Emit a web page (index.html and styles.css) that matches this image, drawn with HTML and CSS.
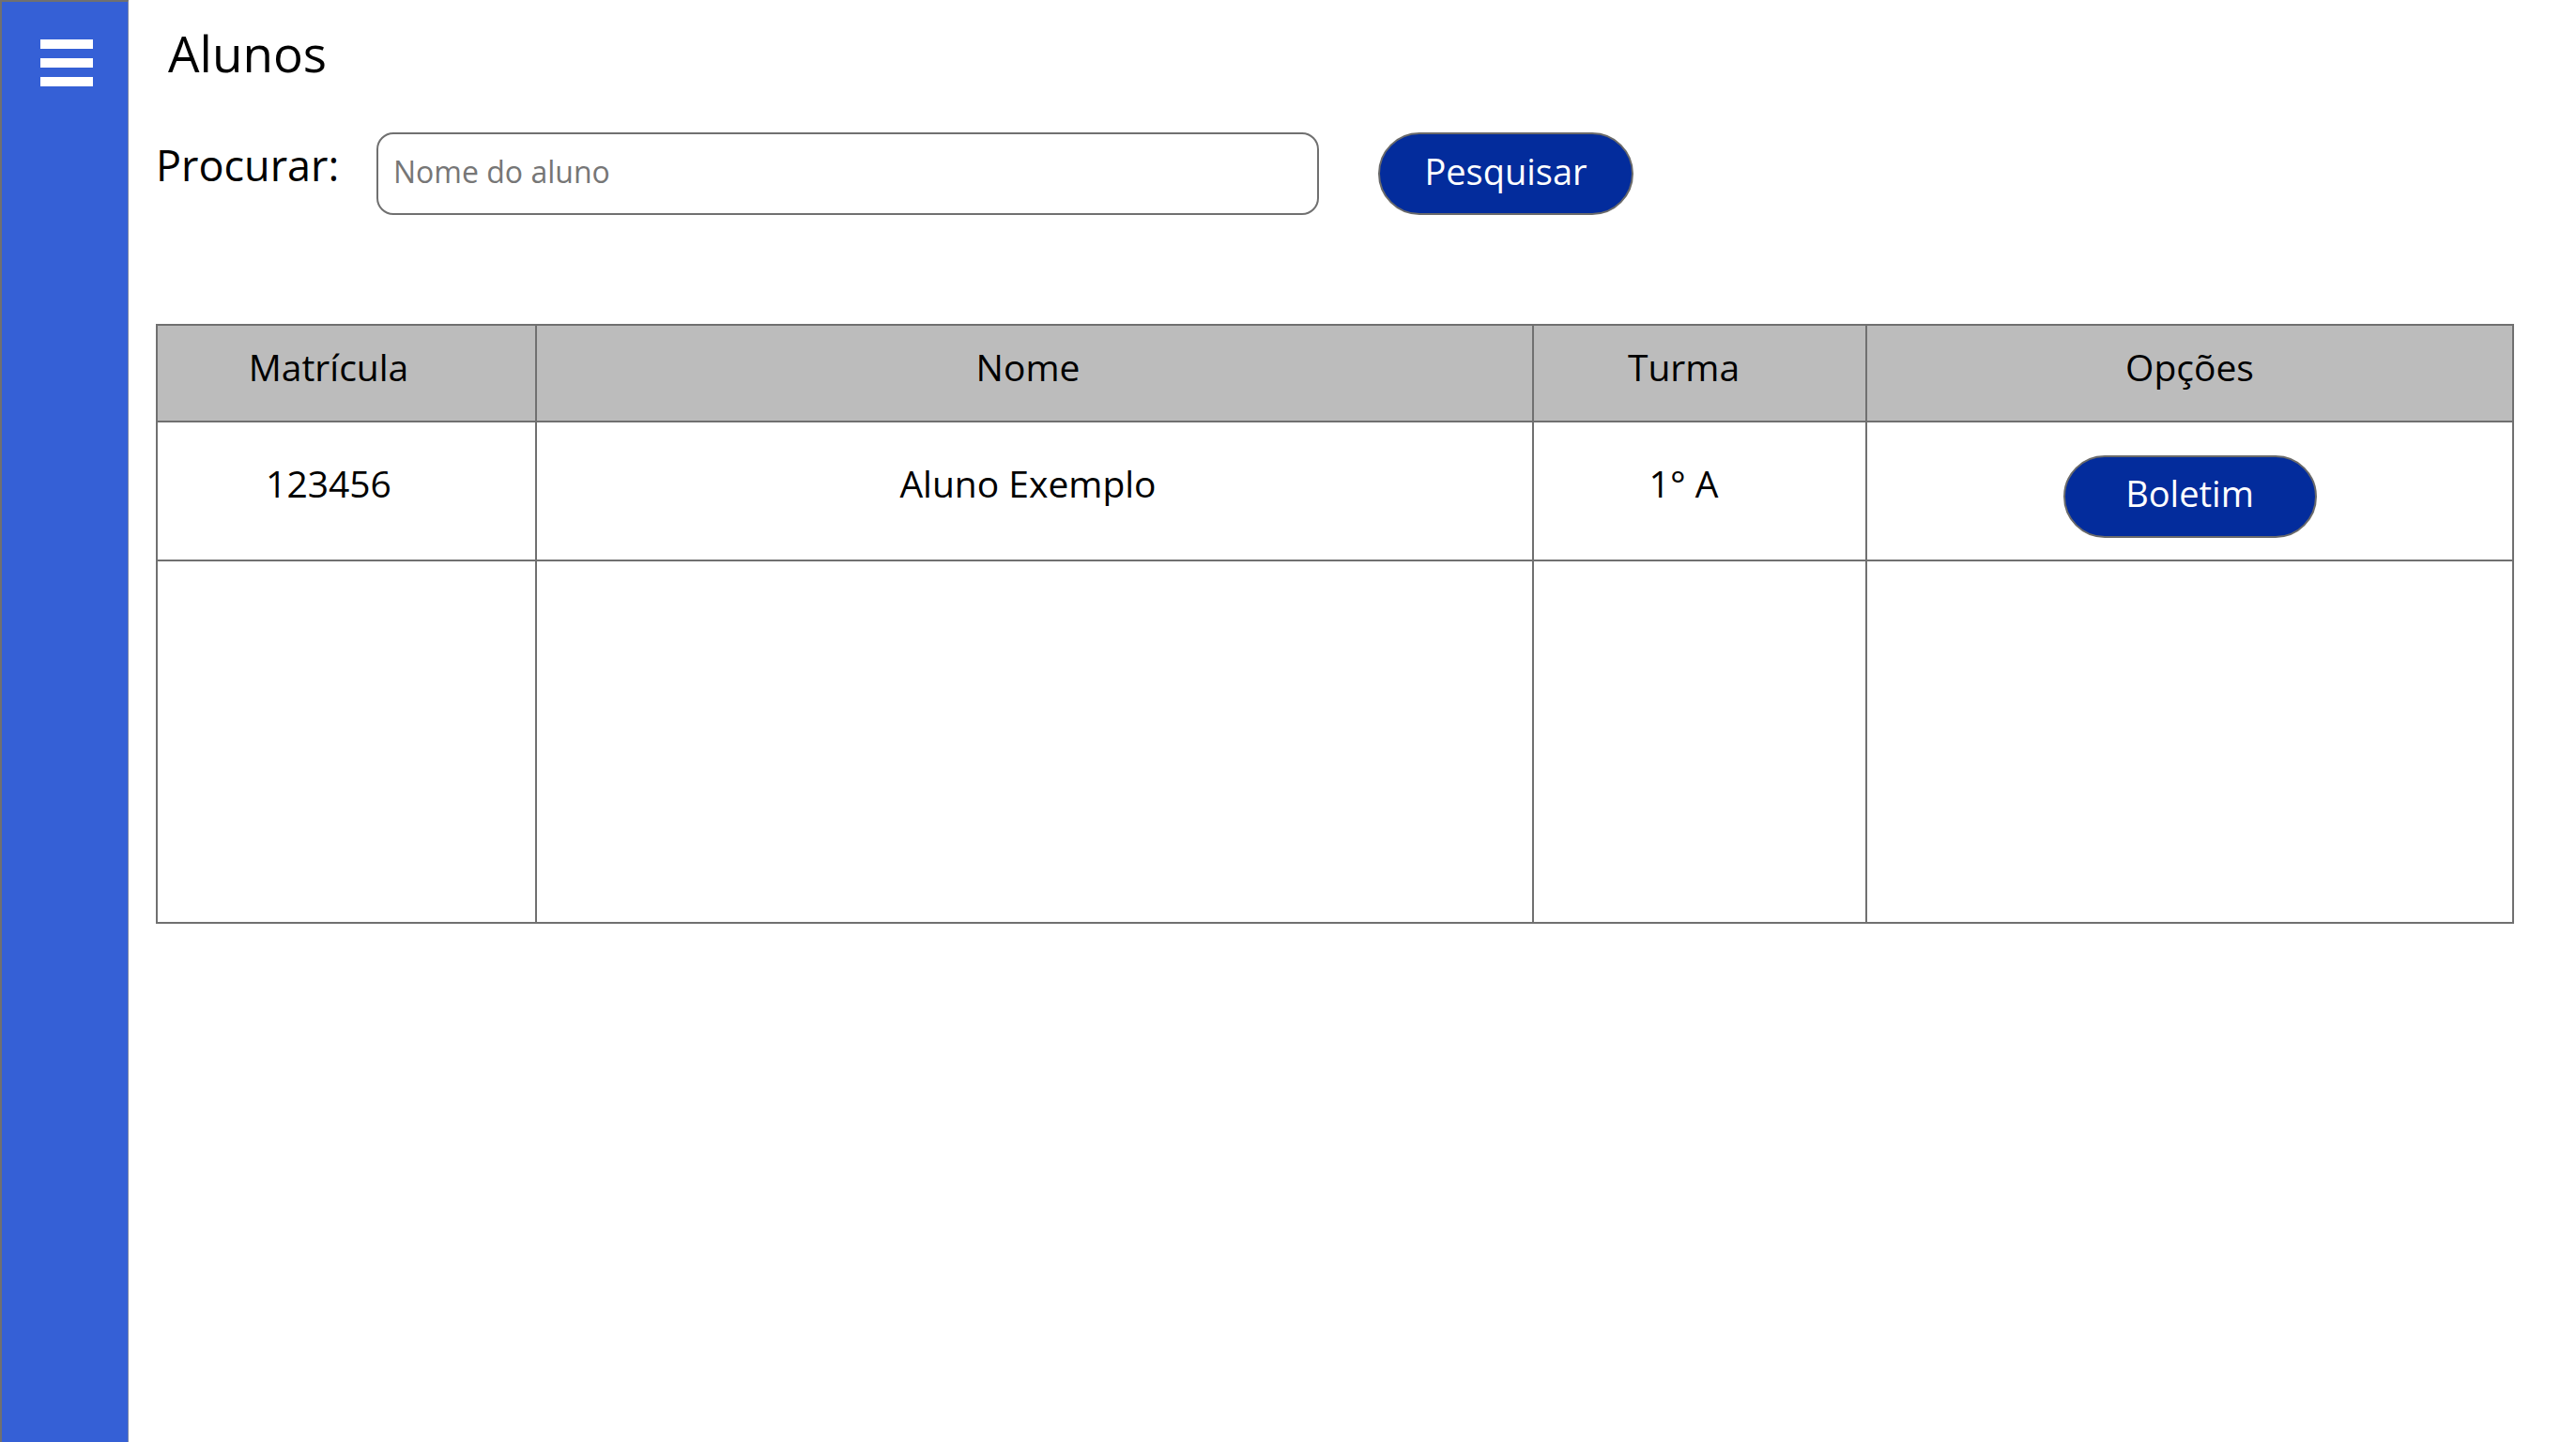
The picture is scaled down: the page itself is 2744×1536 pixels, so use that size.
FILE: index.html
```html
<!DOCTYPE html>
<html lang="pt-BR">
<head>
<meta charset="utf-8">
<title>Alunos</title>
<link rel="stylesheet" href="styles.css">
</head>
<body>
<div class="app">
  <aside class="sidebar">
    <button class="menu" aria-label="Menu"><span></span><span></span><span></span></button>
  </aside>
  <main class="content">
    <h1 class="title">Alunos</h1>
    <form class="search">
      <label class="search-label" for="q">Procurar:</label>
      <input id="q" class="search-input" type="text" placeholder="Nome do aluno">
      <button type="button" class="btn btn-search">Pesquisar</button>
    </form>
    <table class="students">
      <colgroup>
        <col class="col-mat"><col class="col-nome"><col class="col-turma"><col class="col-opc">
      </colgroup>
      <thead>
        <tr class="row-head">
          <th class="cell-mat">Matrícula</th>
          <th class="cell-nome">Nome</th>
          <th class="cell-turma">Turma</th>
          <th class="cell-opc">Opções</th>
        </tr>
      </thead>
      <tbody>
        <tr class="row-data">
          <td class="cell-mat text">123456</td>
          <td class="cell-nome text">Aluno Exemplo</td>
          <td class="cell-turma text">1° A</td>
          <td class="cell-opc action"><button type="button" class="btn btn-boletim">Boletim</button></td>
        </tr>
        <tr class="row-empty">
          <td></td><td></td><td></td><td></td>
        </tr>
      </tbody>
    </table>
  </main>
</div>
</body>
</html>
```
FILE: styles.css
```css
* { box-sizing: border-box; }

html, body {
  margin: 0;
  padding: 0;
  background: #ffffff;
}

body {
  font-family: "Open Sans", "Noto Sans", "Liberation Sans", sans-serif;
  color: #000;
  overflow: hidden;
}

.app {
  display: flex;
  min-height: 100vh;
}

.sidebar {
  flex: 0 0 137px;
  min-height: 100vh;
  background: #3560d6;
  border-left: 2px solid #707070;
  border-top: 2px solid #707070;
  border-right: 1px solid #7a86a8;
  padding: 40px 0 0 41px;
}

.menu {
  display: flex;
  flex-direction: column;
  gap: 10px;
  width: 56px;
  padding: 0;
  margin: 0;
  border: 0;
  background: transparent;
}

.menu span {
  display: block;
  height: 10px;
  width: 56px;
  background: #ffffff;
}

.content {
  flex: 1;
  padding: 22px 0 0 28px;
}

.title {
  margin: 0 0 0 14px;
  font-size: 53px;
  line-height: 70px;
  font-weight: 400;
}

.search {
  display: flex;
  align-items: flex-start;
  margin: 49px 0 0 1px;
}

.search-label {
  flex: 0 0 235px;
  margin-top: 4px;
  font-size: 45px;
  line-height: 61px;
}

.search-input {
  width: 1004px;
  height: 88px;
  border: 2px solid #707070;
  border-radius: 18px;
  padding: 0 16px 5px;
  font-family: inherit;
  font-size: 32px;
  color: #333;
  background: #fff;
  outline: none;
}

.search-input::placeholder {
  color: #767676;
}

.btn {
  font-family: inherit;
  color: #ffffff;
  background: #032c9c;
  border: 2px solid #6a6a6a;
  height: 88px;
  border-radius: 44px;
  font-size: 38px;
  padding: 0 0 7px;
  cursor: pointer;
}

.btn-search {
  width: 272px;
  margin-left: 63px;
}

.btn-boletim {
  width: 270px;
}

.students {
  margin: 116px 0 0 1px;
  border-collapse: collapse;
  table-layout: fixed;
  width: 2512px;
  border: 2px solid #707070;
}

.col-mat { width: 404px; }
.col-nome { width: 1062px; }
.col-turma { width: 355px; }
.col-opc { width: 689px; }

.students th,
.students td {
  border: 2px solid #707070;
  padding: 0;
  text-align: center;
  vertical-align: middle;
  font-size: 39px;
  font-weight: 400;
}

.row-head th {
  background: #bcbcbc;
  height: 103px;
  padding-bottom: 14px;
}

.row-data td {
  height: 148px;
}

.row-data td.text {
  padding-bottom: 18px;
}

.row-data td.action {
  padding-top: 11px;
}

.cell-mat { padding-right: 38px !important; }
.cell-nome { padding-right: 14px !important; }
.cell-turma { padding-right: 34px !important; }

.row-empty td {
  height: 386px;
}
```
